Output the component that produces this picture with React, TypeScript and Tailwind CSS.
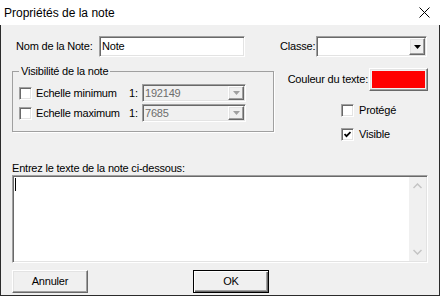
import React from 'react';

const sunken =
  'border border-t-[#a0a0a0] border-l-[#a0a0a0] border-b-white border-r-white shadow-[inset_1px_1px_0_#696969,inset_-1px_-1px_0_#e3e3e3]';
const raised =
  'border border-t-white border-l-white border-b-[#696969] border-r-[#696969] shadow-[inset_-1px_-1px_0_#a0a0a0,inset_1px_1px_0_#e3e3e3]';

function Arrow({ color }: { color: string }) {
  return (
    <svg width="7" height="4" viewBox="0 0 7 4">
      <polygon points="0,0 7,0 3.5,4" fill={color} />
    </svg>
  );
}

function Combo({ value, disabled, className }: { value?: string; disabled?: boolean; className: string }) {
  return (
    <div className={`${sunken} ${disabled ? 'bg-[#f0f0f0] text-[#6d6d6d]' : 'bg-white'} flex items-center p-[1px] ${className}`}>
      <span className="flex-1 pl-[1px] leading-none">{value}</span>
      <div className={`${raised} bg-[#f0f0f0] w-[16px] h-full flex items-center justify-center`}>
        <Arrow color={disabled ? '#a0a0a0' : '#000'} />
      </div>
    </div>
  );
}

function CheckBox({ checked }: { checked?: boolean }) {
  return (
    <div className={`${sunken} bg-white w-[13px] h-[13px] flex items-center justify-center shrink-0`}>
      {checked && (
        <svg width="7" height="7" viewBox="0 0 7 7">
          <polyline points="0.5,3 2.5,5.2 6.5,1" fill="none" stroke="#000" strokeWidth="1.8" />
        </svg>
      )}
    </div>
  );
}

function ScaleRow({ label, value }: { label: string; value: string }) {
  return (
    <div className="flex items-center h-[18px]">
      <div className="ml-[6px]">
        <CheckBox />
      </div>
      <span className="ml-[4px] w-[93px]">{label}</span>
      <span className="w-[13px]">1:</span>
      <Combo value={value} disabled className="w-[104px] h-[18px]" />
    </div>
  );
}

export default function App() {
  return (
    <div className="w-[440px] h-[296px] flex flex-col bg-white text-black font-['Liberation_Sans',Arial,sans-serif]">
      <div className="h-[25px] shrink-0 flex items-center justify-between pl-[4px] pr-[10px] text-[12px]">
        <span>Propriétés de la note</span>
        <svg width="11" height="11" viewBox="0 0 11 11">
          <path d="M0.5 0.5L10.5 10.5M10.5 0.5L0.5 10.5" stroke="#000" strokeWidth="1" />
        </svg>
      </div>

      <div className="flex-1 flex flex-col bg-[#f0f0f0] border-x border-b border-[#2b2b2b] px-[11px] pt-[11px] text-[11px] tracking-[-0.2px]">
        <div className="flex items-center h-[21px]">
          <span className="ml-[4px] w-[83px]">Nom de la Note:</span>
          <div className={`${sunken} bg-white w-[146px] h-[21px] flex items-center pl-[2px]`}>Note</div>
          <span className="ml-[35px] w-[36px]">Classe:</span>
          <Combo className="w-[111px] h-[21px]" />
        </div>

        <div className="flex mt-[8px]">
          <fieldset className="w-[262px] h-[67px] border border-[#a0a0a0] shadow-[1px_1px_0_white]">
            <legend className="ml-[6px] px-[2px] leading-[13px]">Visibilité de la note</legend>
            <div className="flex flex-col gap-[2px] pt-[6px]">
              <ScaleRow label="Echelle minimum" value="192149" />
              <ScaleRow label="Echelle maximum" value="7685" />
            </div>
          </fieldset>

          <div className="flex-1 flex flex-col">
            <div className="flex items-center justify-end mt-[3px]">
              <span className="mr-[1px]">Couleur du texte:</span>
              <div className={`${raised} bg-[#f0f0f0] w-[59px] h-[23px] p-[2px]`}>
                <div className="w-full h-full bg-[#ff0000]" />
              </div>
            </div>
            <div className="flex items-center pl-[67px] mt-[13px] h-[13px]">
              <CheckBox />
              <span className="ml-[5px]">Protégé</span>
            </div>
            <div className="flex items-center pl-[67px] mt-[11px] h-[13px]">
              <CheckBox checked />
              <span className="ml-[5px]">Visible</span>
            </div>
          </div>
        </div>

        <div className="mt-[21px] h-[13px] leading-[13px]">Entrez le texte de la note ci-dessous:</div>
        <div className={`${sunken} bg-white h-[88px] flex p-[1px]`}>
          <div className="flex-1 pl-[1px] pt-[1px]">
            <div className="w-[1px] h-[13px] bg-black" />
          </div>
          <div className="w-[17px] h-full bg-[#f0f0f0] flex flex-col items-center justify-between py-[6px]">
            <svg width="9" height="6" viewBox="0 0 9 6">
              <polyline points="0.5,5 4.5,1 8.5,5" fill="none" stroke="#c4c4c4" strokeWidth="1.5" />
            </svg>
            <svg width="9" height="6" viewBox="0 0 9 6">
              <polyline points="0.5,1 4.5,5 8.5,1" fill="none" stroke="#c4c4c4" strokeWidth="1.5" />
            </svg>
          </div>
        </div>

        <div className="flex mt-[7px]">
          <button className={`${raised} bg-[#f0f0f0] w-[76px] h-[23px]`}>Annuler</button>
          <button className="ml-[105px] w-[76px] h-[23px] bg-[#f0f0f0] border border-black shadow-[inset_1px_1px_0_white,inset_-1px_-1px_0_#696969,inset_-2px_-2px_0_#a0a0a0]">
            OK
          </button>
        </div>
      </div>
    </div>
  );
}
